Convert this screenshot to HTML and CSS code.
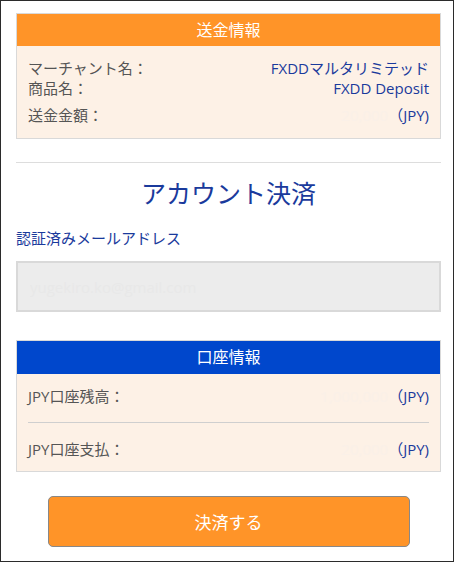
FILE: index.html
```html
<!DOCTYPE html>
<html lang="ja">
<head>
    <meta charset="UTF-8">
    <meta name="viewport" content="width=device-width, initial-scale=1.0">
    <title>アカウント決済</title>
    <link rel="stylesheet" href="styles.css">
</head>
<body>
    <div class="page">
        <div class="info-box">
            <div class="info-header orange">送金情報</div>
            <div class="info-body">
                <div class="info-row">
                    <span class="info-label">マーチャント名：</span>
                    <span class="info-value">FXDDマルタリミテッド</span>
                </div>
                <div class="info-row">
                    <span class="info-label">商品名：</span>
                    <span class="info-value">FXDD Deposit</span>
                </div>
                <div class="info-row amount-row">
                    <span class="info-label">送金金額：</span>
                    <span class="info-value"><span class="faint">20,000</span>（JPY)</span>
                </div>
            </div>
        </div>

        <hr class="divider">

        <h1 class="page-title">アカウント決済</h1>

        <label class="field-label" for="email">認証済みメールアドレス</label>
        <input type="text" id="email" class="field-input" value="yugekiro.ko@gmail.com" disabled>

        <div class="info-box account-box">
            <div class="info-header blue">口座情報</div>
            <div class="info-body account-body">
                <div class="account-row first">
                    <span class="info-label">JPY口座残高：</span>
                    <span class="info-value"><span class="faint">1,000,000</span>（JPY)</span>
                </div>
                <div class="account-row second">
                    <span class="info-label">JPY口座支払：</span>
                    <span class="info-value"><span class="faint">20,000</span>（JPY)</span>
                </div>
            </div>
        </div>

        <button type="button" class="pay-button">決済する</button>
    </div>
</body>
</html>
```

FILE: styles.css
```css
:root {
    --orange: #ff9428;
    --blue: #0047cc;
    --beige: #fdf1e6;
    --border-gray: #d9d9d9;
    --label-color: #555;
    --value-color: #1a3a9c;
    --font-family: "Open Sans", "Noto Sans CJK JP", sans-serif;
}

html, body {
    height: 100%;
}

body {
    margin: 0;
    box-sizing: border-box;
    border: 1px solid #2b2b2b;
    background: #fff;
    font-family: var(--font-family);
    font-size: 15px;
    color: var(--label-color);
}

.page {
    padding: 12px 12px 0 15px;
}

.info-box {
    border: 1px solid var(--border-gray);
    background: var(--beige);
}

.info-header {
    height: 32px;
    line-height: 32px;
    text-align: center;
    color: #fff;
    font-size: 16px;
}

.info-header.orange {
    background: var(--orange);
}

.info-header.blue {
    background: var(--blue);
    height: 33px;
    line-height: 33px;
}

.info-body {
    padding: 12px 11px 13px 11px;
}

.info-row {
    display: flex;
    justify-content: space-between;
    line-height: 20px;
}

.amount-row {
    margin-top: 7px;
}

.info-label {
    color: var(--label-color);
}

.info-value {
    color: var(--value-color);
}

.faint {
    color: #faf0e8;
}

.divider {
    border: none;
    border-top: 1px solid #ddd;
    margin: 23px 0 0;
}

.page-title {
    margin: 13px 0 0;
    text-align: center;
    font-size: 25px;
    font-weight: normal;
    line-height: 34px;
    color: var(--value-color);
}

.field-label {
    display: block;
    margin-top: 18px;
    line-height: 20px;
    color: var(--value-color);
}

.field-input {
    display: block;
    width: 100%;
    box-sizing: border-box;
    height: 51px;
    margin-top: 13px;
    padding: 0 12px;
    border: 2px solid var(--border-gray);
    background: #ececec;
    font-family: var(--font-family);
    font-size: 15px;
    color: #e8e8e8;
}

.account-box {
    margin-top: 28px;
}

.account-body {
    padding-top: 12px;
    padding-bottom: 12px;
}

.account-row {
    display: flex;
    justify-content: space-between;
    line-height: 20px;
}

.account-row.first {
    padding-bottom: 16px;
    border-bottom: 1px solid #cfcfcf;
}

.account-row.second {
    padding-top: 16px;
}

.pay-button {
    display: block;
    width: 362px;
    height: 51px;
    margin: 24px auto 0;
    background: var(--orange);
    border: 1px solid #888;
    border-radius: 5px;
    color: #fff;
    font-family: var(--font-family);
    font-size: 17px;
    cursor: pointer;
}
```
